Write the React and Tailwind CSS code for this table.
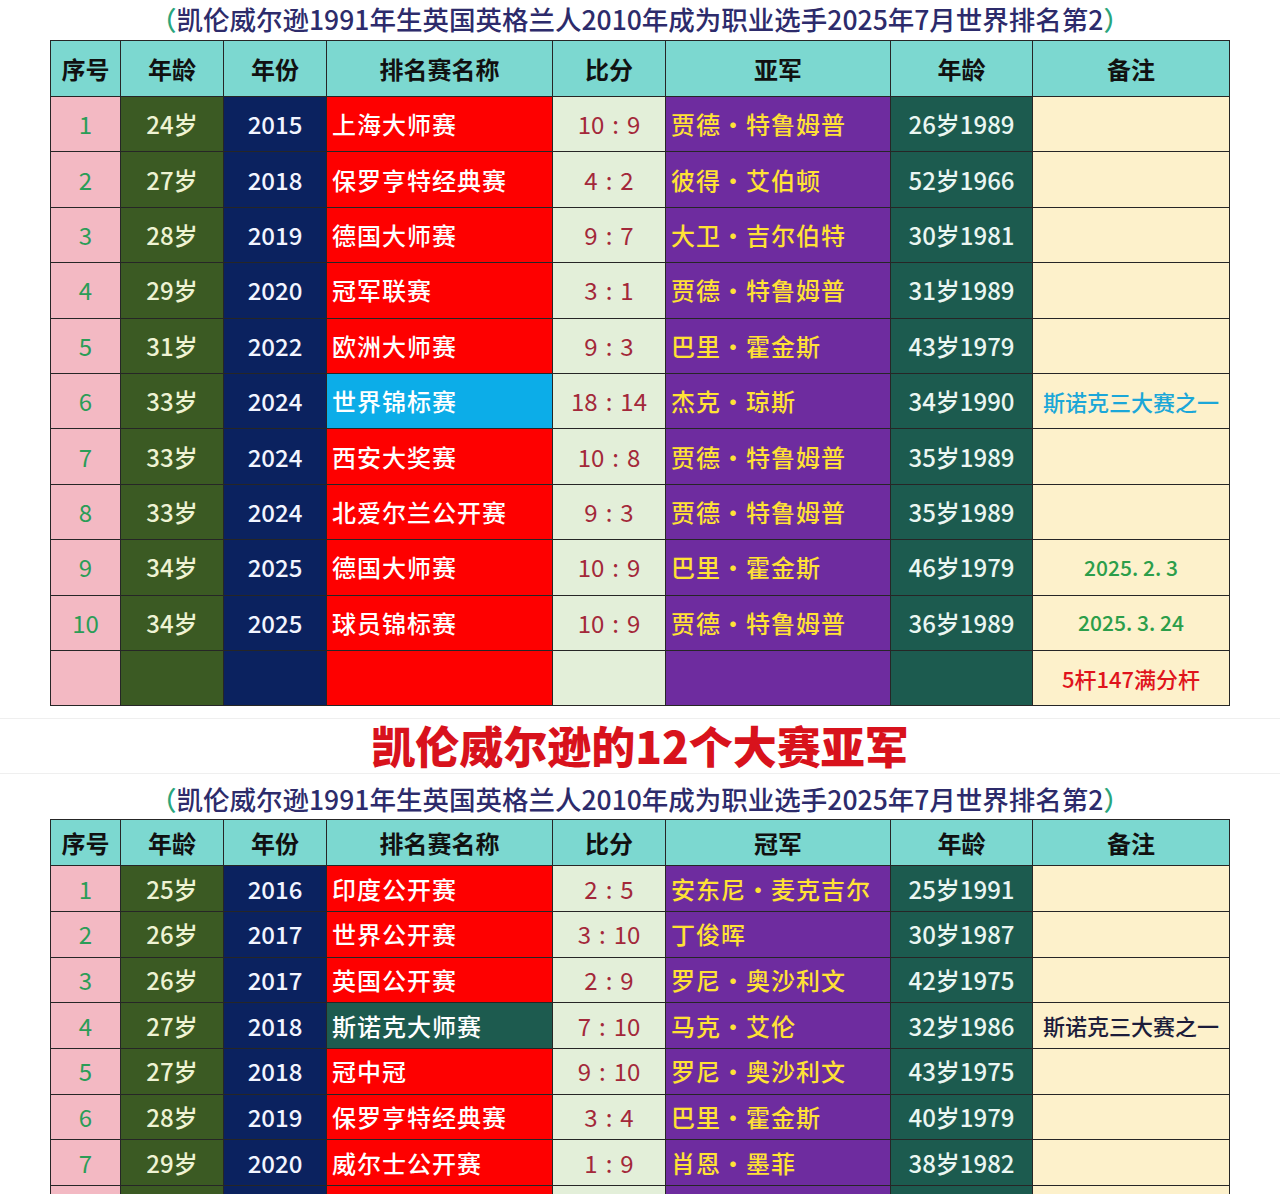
import React from "react";

const t1 = [
  ["1", "24岁", "2015", "上海大师赛", "10：9", "贾德・特鲁姆普", "26岁1989", "", ""],
  ["2", "27岁", "2018", "保罗亨特经典赛", "4：2", "彼得・艾伯顿", "52岁1966", "", ""],
  ["3", "28岁", "2019", "德国大师赛", "9：7", "大卫・吉尔伯特", "30岁1981", "", ""],
  ["4", "29岁", "2020", "冠军联赛", "3：1", "贾德・特鲁姆普", "31岁1989", "", ""],
  ["5", "31岁", "2022", "欧洲大师赛", "9：3", "巴里・霍金斯", "43岁1979", "", ""],
  ["6", "33岁", "2024", "世界锦标赛", "18：14", "杰克・琼斯", "34岁1990", "斯诺克三大赛之一", "blue"],
  ["7", "33岁", "2024", "西安大奖赛", "10：8", "贾德・特鲁姆普", "35岁1989", "", ""],
  ["8", "33岁", "2024", "北爱尔兰公开赛", "9：3", "贾德・特鲁姆普", "35岁1989", "", ""],
  ["9", "34岁", "2025", "德国大师赛", "10：9", "巴里・霍金斯", "46岁1979", "2025. 2. 3", "green"],
  ["10", "34岁", "2025", "球员锦标赛", "10：9", "贾德・特鲁姆普", "36岁1989", "2025. 3. 24", "green"],
  ["", "", "", "", "", "", "", "5杆147满分杆", "red"],
];

const t2 = [
  ["1", "25岁", "2016", "印度公开赛", "2：5", "安东尼・麦克吉尔", "25岁1991", "", ""],
  ["2", "26岁", "2017", "世界公开赛", "3：10", "丁俊晖", "30岁1987", "", ""],
  ["3", "26岁", "2017", "英国公开赛", "2：9", "罗尼・奥沙利文", "42岁1975", "", ""],
  ["4", "27岁", "2018", "斯诺克大师赛", "7：10", "马克・艾伦", "32岁1986", "斯诺克三大赛之一", "navy"],
  ["5", "27岁", "2018", "冠中冠", "9：10", "罗尼・奥沙利文", "43岁1975", "", ""],
  ["6", "28岁", "2019", "保罗亨特经典赛", "3：4", "巴里・霍金斯", "40岁1979", "", ""],
  ["7", "29岁", "2020", "威尔士公开赛", "1：9", "肖恩・墨菲", "38岁1982", "", ""],
  ["", "", "", "", "", "", "", "", ""],
];

function Subtitle({ className }) {
  return (
    <div className={"flex items-center justify-center text-[26.5px] text-[#2d2b6b] font-medium leading-[32px] " + className}>
      <span className="text-[#2aa57c]">（</span>
      <span>凯伦威尔逊1991年生英国英格兰人2010年成为职业选手2025年7月世界排名第2</span>
      <span className="text-[#2aa57c]">）</span>
    </div>
  );
}

function Header({ runner, h }) {
  const labels = ["序号", "年龄", "年份", "排名赛名称", "比分", runner, "年龄", "备注"];
  return labels.map((l, i) => (
    <div
      key={i}
      className={"flex items-center justify-center bg-[#7cd8d0] text-[24px] font-bold text-[#111] " + h}
    >
      {l}
    </div>
  ));
}

function Score({ s }) {
  if (!s) return null;
  const [a, b] = s.split("：");
  return (
    <span>
      {a}
      <span className="mx-[8px]">:</span>
      {b}
    </span>
  );
}

function Rows({ data, h }) {
  return data.map((r, idx) => {
    const tourBg =
      r[3] === "世界锦标赛" ? "bg-[#0cade8]" : r[3] === "斯诺克大师赛" ? "bg-[#1d5b4f]" : "bg-[#fe0000]";
    const noteColor =
      r[8] === "blue"
        ? "text-[#1ba7d8] text-[22px]"
        : r[8] === "green"
        ? "text-[#2c9e4a] text-[21px]"
        : r[8] === "red"
        ? "text-[#e0141c] text-[22px] font-bold"
        : "text-[#1c1c3a] text-[22px]";
    return (
      <React.Fragment key={idx}>
        <div className={"flex items-center justify-center bg-[#f3b9c3] text-[24px] text-[#2a9d57] " + h}>{r[0]}</div>
        <div className={"flex items-center justify-center bg-[#3b5a23] text-[24px] text-[#eef3d3] font-medium " + h}>{r[1]}</div>
        <div className={"flex items-center justify-center bg-[#0b225f] text-[24px] text-[#f2f5ff] font-medium " + h}>{r[2]}</div>
        <div className={"flex items-center justify-start pl-[5px] text-[24px] tracking-[1px] text-white font-medium " + tourBg + " " + h}>{r[3]}</div>
        <div className={"flex items-center justify-center bg-[#e3efd9] text-[24px] text-[#a3283a] " + h}><Score s={r[4]} /></div>
        <div className={"flex items-center justify-start pl-[5px] bg-[#6e2c9f] text-[24px] tracking-[1px] text-[#ffe135] font-medium " + h}>{r[5]}</div>
        <div className={"flex items-center justify-center bg-[#1c5b4f] text-[24px] text-[#eaf6f2] font-medium " + h}>{r[6]}</div>
        <div className={"flex items-center justify-center bg-[#fdf1cb] font-medium " + noteColor + " " + h}>{r[7]}</div>
      </React.Fragment>
    );
  });
}

export default function App() {
  return (
    <div className="w-[1280px] h-[1194px] overflow-hidden bg-white font-['Noto_Sans_CJK_SC','Noto_Sans',sans-serif]">
      <Subtitle className="h-[40px] pb-[3px]" />
      <div className="ml-[50px] w-[1180px] grid grid-cols-[69px_102px_102px_225px_112px_224px_141px_196px] gap-px bg-[#262626] border border-[#262626]">
        <Header runner="亚军" h="h-[55px]" />
        <Rows data={t1} h="h-[54.4px]" />
      </div>
      <div className="h-[13px] border-b border-[#efefef]" />
      <div className="h-[54px] flex items-center justify-center text-[44px] font-black text-[#d8121c] leading-[52px] pb-[2px]">
        凯伦威尔逊的12个大赛亚军
      </div>
      <Subtitle className="h-[46px] pt-[4px] border-t border-[#efefef]" />
      <div className="ml-[50px] w-[1180px] grid grid-cols-[69px_102px_102px_225px_112px_224px_141px_196px] gap-px bg-[#262626] border border-[#262626]">
        <Header runner="冠军" h="h-[45px]" />
        <Rows data={t2} h="h-[44.7px]" />
      </div>
    </div>
  );
}
